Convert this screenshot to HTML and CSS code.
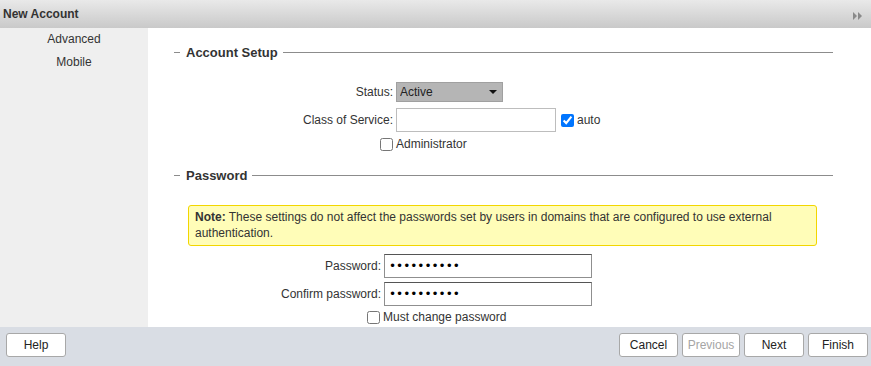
FILE: index.html
```html
<!DOCTYPE html>
<html>
<head>
<meta name="viewport" content="width=device-width, initial-scale=1">
<link rel="stylesheet" href="styles.css">
</head>
<body>

  <!-- Dialog title bar -->
  <div class="titlebar">
    <span class="title">New Account</span>
    <svg class="collapse" width="10" height="8" viewBox="0 0 10 8">
      <path d="M0 0 L4 4 L0 8 Z M5 0 L9 4 L5 8 Z" fill="#8a8a8a"/>
    </svg>
  </div>

  <div class="main">
    <!-- Left navigation -->
    <div class="sidebar">
      <div class="navitem">Advanced</div>
      <div class="navitem">Mobile</div>
    </div>

    <!-- Wizard page -->
    <div class="content">
      <div class="section setup">
        <div class="legend"><span class="dash"></span><span class="legendtext">Account Setup</span><span class="rule"></span></div>

        <div class="formrow first">
          <label class="lbl">Status:</label>
          <div class="selectbox">
            <select class="select">
              <option selected>Active</option>
              <option>Locked</option>
              <option>Closed</option>
            </select>
          </div>
        </div>
        <div class="formrow">
          <label class="lbl">Class of Service:</label>
          <input type="text" class="textfield cos">
          <input type="checkbox" class="check" checked><span class="checktext">auto</span>
        </div>
        <div class="checkrow admin">
          <input type="checkbox" class="check"><span class="checktext">Administrator</span>
        </div>
      </div>

      <div class="section pass">
        <div class="legend"><span class="dash"></span><span class="legendtext">Password</span><span class="rule"></span></div>

        <div class="note"><b>Note:</b> These settings do not affect the passwords set by users in domains that are configured to use external authentication.</div>

        <div class="formrow">
          <label class="lbl">Password:</label>
          <input type="password" class="textfield pw" value="abcdefghij">
        </div>
        <div class="formrow">
          <label class="lbl">Confirm password:</label>
          <input type="password" class="textfield pw" value="abcdefghij">
        </div>
        <div class="checkrow mustchange">
          <input type="checkbox" class="check"><span class="checktext">Must change password</span>
        </div>
      </div>
    </div>
  </div>

  <!-- Button bar -->
  <div class="footer">
    <button class="btn">Help</button>
    <div class="spacer"></div>
    <button class="btn cancel">Cancel</button>
    <button class="btn" disabled>Previous</button>
    <button class="btn">Next</button>
    <button class="btn">Finish</button>
  </div>

</body>
</html>
```

FILE: styles.css
```css
* {box-sizing: border-box}

body {
  margin: 0;
  font-family: "Liberation Sans", Arial, sans-serif;
  font-size: 12px;
  color: #333;
  height: 366px;
  display: flex;
  flex-direction: column;
  overflow: hidden;
}

/* Title bar */
.titlebar {
  height: 28px;
  display: flex;
  align-items: center;
  padding: 0 8px 0 3px;
  background: linear-gradient(#e9e9e9, #c9c9c9);
}

.title {
  font-weight: bold;
  flex: 1;
}

.collapse {
  margin-top: 3px;
}

/* Body */
.main {
  flex: 1;
  display: flex;
  min-height: 0;
}

.sidebar {
  width: 148px;
  background-color: #efefef;
  padding-top: 3px;
}

.navitem {
  text-align: center;
  height: 23px;
  line-height: 16px;
}

.content {
  flex: 1;
  padding: 16px 38px 0 26px;
}

/* Fieldset-like legend */
.legend {
  display: flex;
  align-items: center;
  height: 16px;
}

.dash {
  width: 6px;
  border-top: 1px solid #8c8c8c;
}

.legendtext {
  font-size: 13px;
  font-weight: bold;
  padding: 0 5px 0 6px;
}

.rule {
  flex: 1;
  border-top: 1px solid #8c8c8c;
}

/* Form rows */
.formrow {
  display: flex;
  align-items: center;
}

.lbl {
  text-align: right;
  padding-right: 3px;
}

.setup .lbl {
  width: 222px;
}

.pass .lbl {
  width: 210px;
}

.setup .first {
  margin-top: 22px;
}

.setup .formrow + .formrow {
  margin-top: 6px;
}

.selectbox {
  position: relative;
  width: 107px;
  height: 20px;
}

.select {
  appearance: none;
  -webkit-appearance: none;
  width: 100%;
  height: 100%;
  border: 1px solid #a0a0a0;
  border-radius: 0;
  background-color: #b5b5b5;
  font-family: inherit;
  font-size: 12px;
  color: #222;
  padding: 0 0 0 3px;
  outline: none;
}

/* Dropdown arrow drawn over the select */
.selectbox::after {
  content: "";
  position: absolute;
  right: 6px;
  top: 8px;
  border-left: 4px solid transparent;
  border-right: 4px solid transparent;
  border-top: 4px solid #111;
  pointer-events: none;
}

.textfield {
  height: 24px;
  font-family: inherit;
  font-size: 12px;
  outline: none;
  margin: 0;
  background-color: #fff;
}

.cos {
  width: 160px;
  border: 1px solid #bdbdbd;
}

.pw {
  width: 208px;
  border: 1px solid #8f8f8f;
  border-top-color: #555;
  padding: 0 4px;
  font-family: "DejaVu Sans", sans-serif;
  font-size: 12px;
  color: #000;
}

.check {
  width: 13px;
  height: 13px;
  margin: 0 3px 0 5px;
}

.checkrow {
  display: flex;
  align-items: center;
  margin-top: 5px;
}

.checkrow .check {
  margin-left: 0;
}

.admin {
  padding-left: 206px;
}

.mustchange {
  padding-left: 193px;
  margin-top: 4px;
}

/* Password section */
.pass {
  margin-top: 16px;
}

.note {
  margin: 22px 16px 8px 14px;
  padding: 3px 6px 4px;
  background-color: #fffdb8;
  border: 1px solid #f2d600;
  border-radius: 3px;
  line-height: 16px;
}

.pass .formrow + .formrow {
  margin-top: 4px;
}

/* Footer buttons */
.footer {
  height: 39px;
  background-color: #d9dde4;
  display: flex;
  align-items: flex-start;
  padding: 6px 3px 0 6px;
  gap: 4px;
}

.spacer {
  flex: 1;
}

.btn {
  height: 24px;
  width: 60px;
  background-color: #fff;
  border: 1px solid #a8a8a8;
  border-radius: 3px;
  font-family: inherit;
  font-size: 12px;
  color: #222;
  padding: 0;
}

.cancel {
  width: 59px;
}

.btn:disabled {
  color: #a5a5a5;
  width: 58px;
}
```
